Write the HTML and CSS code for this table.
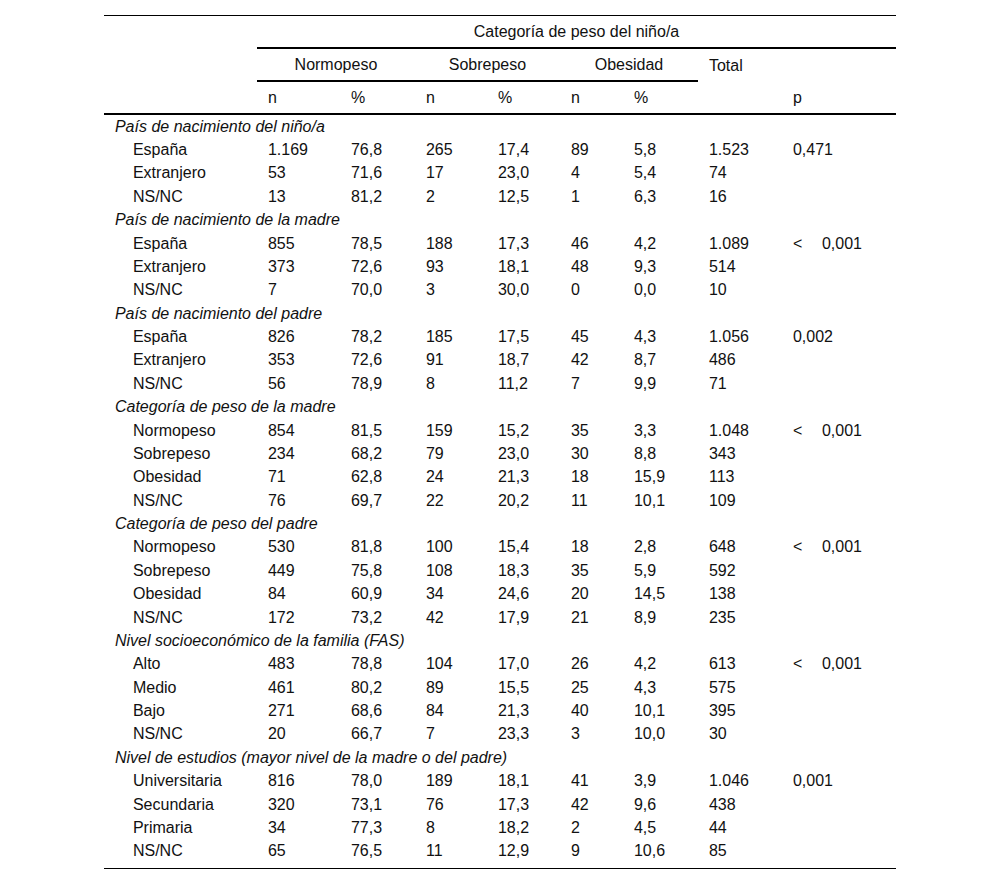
FILE: index.html
```html
<!DOCTYPE html>
<html lang="es">
<head>
<meta charset="utf-8">
<title>Categoría de peso del niño/a</title>
<link rel="stylesheet" href="styles.css">
</head>
<body>
<table class="tbl">
  <colgroup>
    <col class="c-label"><col class="c1"><col class="c2"><col class="c3"><col class="c4"><col class="c5"><col class="c6"><col class="c7"><col class="c8">
  </colgroup>
  <thead>
    <tr class="h1">
      <th class="blank" rowspan="3"></th>
      <th class="span-head" colspan="8">Categoría de peso del niño/a</th>
    </tr>
    <tr class="h2">
      <th class="grp" colspan="2">Normopeso</th>
      <th class="grp" colspan="2">Sobrepeso</th>
      <th class="grp" colspan="2">Obesidad</th>
      <th class="left">Total</th>
      <th></th>
    </tr>
    <tr class="h3">
      <th class="left">n</th><th class="left">%</th>
      <th class="left">n</th><th class="left">%</th>
      <th class="left">n</th><th class="left">%</th>
      <th></th>
      <th class="left">p</th>
    </tr>
  </thead>
  <tbody>
    <tr class="g"><td colspan="9">País de nacimiento del niño/a</td></tr>
    <tr><td class="lab">España</td><td>1.169</td><td>76,8</td><td>265</td><td>17,4</td><td>89</td><td>5,8</td><td>1.523</td><td>0,471</td></tr>
    <tr><td class="lab">Extranjero</td><td>53</td><td>71,6</td><td>17</td><td>23,0</td><td>4</td><td>5,4</td><td>74</td><td></td></tr>
    <tr><td class="lab">NS/NC</td><td>13</td><td>81,2</td><td>2</td><td>12,5</td><td>1</td><td>6,3</td><td>16</td><td></td></tr>

    <tr class="g"><td colspan="9">País de nacimiento de la madre</td></tr>
    <tr><td class="lab">España</td><td>855</td><td>78,5</td><td>188</td><td>17,3</td><td>46</td><td>4,2</td><td>1.089</td><td><span class="lt">&lt;</span>0,001</td></tr>
    <tr><td class="lab">Extranjero</td><td>373</td><td>72,6</td><td>93</td><td>18,1</td><td>48</td><td>9,3</td><td>514</td><td></td></tr>
    <tr><td class="lab">NS/NC</td><td>7</td><td>70,0</td><td>3</td><td>30,0</td><td>0</td><td>0,0</td><td>10</td><td></td></tr>

    <tr class="g"><td colspan="9">País de nacimiento del padre</td></tr>
    <tr><td class="lab">España</td><td>826</td><td>78,2</td><td>185</td><td>17,5</td><td>45</td><td>4,3</td><td>1.056</td><td>0,002</td></tr>
    <tr><td class="lab">Extranjero</td><td>353</td><td>72,6</td><td>91</td><td>18,7</td><td>42</td><td>8,7</td><td>486</td><td></td></tr>
    <tr><td class="lab">NS/NC</td><td>56</td><td>78,9</td><td>8</td><td>11,2</td><td>7</td><td>9,9</td><td>71</td><td></td></tr>

    <tr class="g"><td colspan="9">Categoría de peso de la madre</td></tr>
    <tr><td class="lab">Normopeso</td><td>854</td><td>81,5</td><td>159</td><td>15,2</td><td>35</td><td>3,3</td><td>1.048</td><td><span class="lt">&lt;</span>0,001</td></tr>
    <tr><td class="lab">Sobrepeso</td><td>234</td><td>68,2</td><td>79</td><td>23,0</td><td>30</td><td>8,8</td><td>343</td><td></td></tr>
    <tr><td class="lab">Obesidad</td><td>71</td><td>62,8</td><td>24</td><td>21,3</td><td>18</td><td>15,9</td><td>113</td><td></td></tr>
    <tr><td class="lab">NS/NC</td><td>76</td><td>69,7</td><td>22</td><td>20,2</td><td>11</td><td>10,1</td><td>109</td><td></td></tr>

    <tr class="g"><td colspan="9">Categoría de peso del padre</td></tr>
    <tr><td class="lab">Normopeso</td><td>530</td><td>81,8</td><td>100</td><td>15,4</td><td>18</td><td>2,8</td><td>648</td><td><span class="lt">&lt;</span>0,001</td></tr>
    <tr><td class="lab">Sobrepeso</td><td>449</td><td>75,8</td><td>108</td><td>18,3</td><td>35</td><td>5,9</td><td>592</td><td></td></tr>
    <tr><td class="lab">Obesidad</td><td>84</td><td>60,9</td><td>34</td><td>24,6</td><td>20</td><td>14,5</td><td>138</td><td></td></tr>
    <tr><td class="lab">NS/NC</td><td>172</td><td>73,2</td><td>42</td><td>17,9</td><td>21</td><td>8,9</td><td>235</td><td></td></tr>

    <tr class="g"><td colspan="9">Nivel socioeconómico de la familia (FAS)</td></tr>
    <tr><td class="lab">Alto</td><td>483</td><td>78,8</td><td>104</td><td>17,0</td><td>26</td><td>4,2</td><td>613</td><td><span class="lt">&lt;</span>0,001</td></tr>
    <tr><td class="lab">Medio</td><td>461</td><td>80,2</td><td>89</td><td>15,5</td><td>25</td><td>4,3</td><td>575</td><td></td></tr>
    <tr><td class="lab">Bajo</td><td>271</td><td>68,6</td><td>84</td><td>21,3</td><td>40</td><td>10,1</td><td>395</td><td></td></tr>
    <tr><td class="lab">NS/NC</td><td>20</td><td>66,7</td><td>7</td><td>23,3</td><td>3</td><td>10,0</td><td>30</td><td></td></tr>

    <tr class="g"><td colspan="9">Nivel de estudios (mayor nivel de la madre o del padre)</td></tr>
    <tr><td class="lab">Universitaria</td><td>816</td><td>78,0</td><td>189</td><td>18,1</td><td>41</td><td>3,9</td><td>1.046</td><td>0,001</td></tr>
    <tr><td class="lab">Secundaria</td><td>320</td><td>73,1</td><td>76</td><td>17,3</td><td>42</td><td>9,6</td><td>438</td><td></td></tr>
    <tr><td class="lab">Primaria</td><td>34</td><td>77,3</td><td>8</td><td>18,2</td><td>2</td><td>4,5</td><td>44</td><td></td></tr>
    <tr class="last"><td class="lab">NS/NC</td><td>65</td><td>76,5</td><td>11</td><td>12,9</td><td>9</td><td>10,6</td><td>85</td><td></td></tr>
  </tbody>
</table>
</body>
</html>
```
FILE: styles.css
```css
html, body {
  margin: 0;
  padding: 0;
  background: #ffffff;
}

body {
  font-family: "Liberation Sans", Arial, Helvetica, sans-serif;
  font-size: 16px;
  color: #111111;
  padding-top: 15px;
}

.tbl {
  width: 792px;
  margin: 0 auto;
  border-collapse: collapse;
  table-layout: fixed;
  border-top: 1px solid #000;
  border-bottom: 1px solid #000;
}

.c-label { width: 153px; }
.c1 { width: 83px; }
.c2 { width: 75px; }
.c3 { width: 72px; }
.c4 { width: 73px; }
.c5 { width: 63px; }
.c6 { width: 75px; }
.c7 { width: 84px; }
.c8 { width: 114px; }

th {
  font-weight: normal;
  padding: 7px 11px 6px;
  line-height: 18px;
  vertical-align: middle;
}

.span-head {
  text-align: center;
  border-bottom: 2px solid #000;
}

.grp {
  text-align: center;
  border-bottom: 2px solid #000;
}

.left { text-align: left; }

.h3 th { border-bottom: 2px solid #000; }
.blank { border-bottom: 2px solid #000; }

td {
  padding: 2.7px 11px;
  line-height: 18px;
  white-space: nowrap;
  vertical-align: middle;
}

td.lab { padding-left: 29px; }

.g td {
  font-style: italic;
  padding-left: 11px;
}

.last td {
  padding-bottom: 8px;
}

.lt {
  display: inline-block;
  width: 29px;
}
```
